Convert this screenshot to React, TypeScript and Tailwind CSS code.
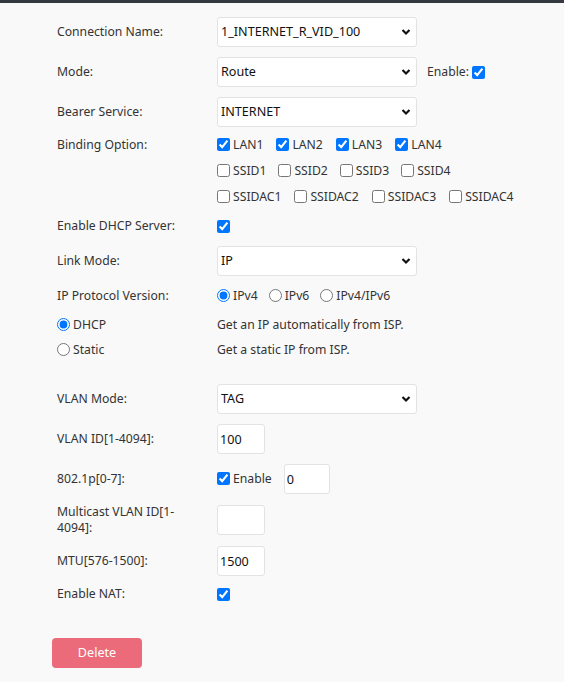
import React from "react";

const font = { fontFamily: '"Noto Sans", "Open Sans", Arial, sans-serif' };

const Select = ({ value }: { value: string }) => (
  <div className="relative w-[200px] h-[30px]">
    <select
      defaultValue={value}
      className="appearance-none w-full h-full bg-white border border-[#e3e3e3] rounded-[3px] pl-[3px] pr-6 text-[12.6px] text-[#111] outline-none"
    >
      <option>{value}</option>
    </select>
    <svg
      className="absolute right-[6px] top-[11px] pointer-events-none"
      width="10"
      height="8"
      viewBox="0 0 10 8"
    >
      <path d="M1.5 2 L5 5.5 L8.5 2" fill="none" stroke="#111" strokeWidth="2.2" />
    </svg>
  </div>
);

const TextBox = ({ value, w = "w-[48px]" }: { value: string; w?: string }) => (
  <input
    defaultValue={value}
    className={`${w} h-[30px] bg-white border border-[#e3e3e3] rounded-[3px] px-[2px] text-[12.6px] text-[#111] outline-none`}
  />
);

const Check = ({ label, checked }: { label?: string; checked?: boolean }) => (
  <label className="flex items-center">
    <input type="checkbox" defaultChecked={checked} className="m-0 w-[13px] h-[13px] accent-[#0075ff]" />
    {label && <span className="ml-[3px]">{label}</span>}
  </label>
);

const Radio = ({ label, checked, name }: { label: string; checked?: boolean; name: string }) => (
  <label className="flex items-center">
    <input type="radio" name={name} defaultChecked={checked} className="m-0 w-[13px] h-[13px] accent-[#0075ff]" />
    <span className="ml-[3px]">{label}</span>
  </label>
);

const Row = ({
  label,
  children,
  className = "",
}: {
  label: React.ReactNode;
  children?: React.ReactNode;
  className?: string;
}) => (
  <div className={`flex items-center ${className}`}>
    <div className="w-[160px] shrink-0">{label}</div>
    <div className="flex items-center">{children}</div>
  </div>
);

export default function App() {
  return (
    <div className="min-h-[682px] bg-[#f9f9f9] text-[12.2px] text-[#333]" style={font}>
      <div className="h-[3px] bg-[#343a40]" />
      <div className="pl-[57px] pt-[14px] flex flex-col">
        <Row label="Connection Name:" className="h-[30px]">
          <Select value="1_INTERNET_R_VID_100" />
        </Row>
        <Row label="Mode:" className="h-[30px] mt-[10px]">
          <Select value="Route" />
          <span className="ml-[10px]">Enable:</span>
          <input type="checkbox" defaultChecked className="ml-[3px] w-[13px] h-[13px] accent-[#0075ff]" />
        </Row>
        <Row label="Bearer Service:" className="h-[30px] mt-[10px]">
          <Select value="INTERNET" />
        </Row>
        <div className="flex mt-[6px]">
          <div className="w-[160px] shrink-0 h-[24px] flex items-center">Binding Option:</div>
          <div className="flex flex-col">
            <div className="flex items-center gap-[13px] h-[24px]">
              <Check label="LAN1" checked />
              <Check label="LAN2" checked />
              <Check label="LAN3" checked />
              <Check label="LAN4" checked />
            </div>
            <div className="flex items-center gap-[12px] h-[26px] mt-[1px]">
              <Check label="SSID1" />
              <Check label="SSID2" />
              <Check label="SSID3" />
              <Check label="SSID4" />
            </div>
            <div className="flex items-center gap-[13px] h-[26px]">
              <Check label="SSIDAC1" />
              <Check label="SSIDAC2" />
              <Check label="SSIDAC3" />
              <Check label="SSIDAC4" />
            </div>
          </div>
        </div>
        <Row label="Enable DHCP Server:" className="h-[24px] mt-[4px]">
          <Check checked />
        </Row>
        <Row label="Link Mode:" className="h-[30px] mt-[8px]">
          <Select value="IP" />
        </Row>
        <Row label="IP Protocol Version:" className="h-[24px] mt-[8px]">
          <div className="flex items-center gap-[11px]">
            <Radio name="ipver" label="IPv4" checked />
            <Radio name="ipver" label="IPv6" />
            <Radio name="ipver" label="IPv4/IPv6" />
          </div>
        </Row>
        <Row label={<Radio name="wan" label="DHCP" checked />} className="h-[24px] mt-[5px]">
          <span>Get an IP automatically from ISP.</span>
        </Row>
        <Row label={<Radio name="wan" label="Static" />} className="h-[24px] mt-[1px]">
          <span>Get a static IP from ISP.</span>
        </Row>
        <Row label="VLAN Mode:" className="h-[30px] mt-[22px]">
          <Select value="TAG" />
        </Row>
        <Row label="VLAN ID[1-4094]:" className="h-[30px] mt-[10px]">
          <TextBox value="100" />
        </Row>
        <Row label="802.1p[0-7]:" className="h-[30px] mt-[10px]">
          <Check label="Enable" checked />
          <div className="ml-[12px]">
            <TextBox value="0" w="w-[46px]" />
          </div>
        </Row>
        <div className="flex items-center mt-[11px] h-[30px]">
          <div className="w-[160px] shrink-0 flex flex-col leading-[16px]">
            <span>Multicast VLAN ID[1-</span>
            <span>4094]:</span>
          </div>
          <TextBox value="" />
        </div>
        <Row label="MTU[576-1500]:" className="h-[30px] mt-[11px]">
          <TextBox value="1500" />
        </Row>
        <Row label="Enable NAT:" className="h-[24px] mt-[6px]">
          <Check checked />
        </Row>
      </div>
      <div className="pl-[52px] mt-[32px]">
        <button className="w-[90px] h-[30px] bg-[#eb6b7a] rounded-[4px] text-white text-[12.6px]">
          Delete
        </button>
      </div>
    </div>
  );
}
